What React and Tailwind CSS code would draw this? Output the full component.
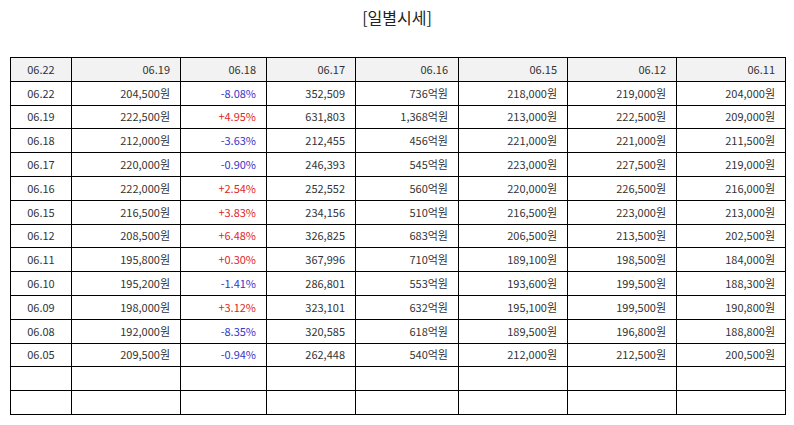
import React from "react";

const headers = ["06.22", "06.19", "06.18", "06.17", "06.16", "06.15", "06.12", "06.11"];
const widths = ["w-[61px]", "w-[109px]", "w-[86px]", "w-[89px]", "w-[103px]", "w-[109px]", "w-[109px]", "w-[109px]"];

const rows = [
  ["06.22", "204,500원", "-8.08%", "352,509", "736억원", "218,000원", "219,000원", "204,000원"],
  ["06.19", "222,500원", "+4.95%", "631,803", "1,368억원", "213,000원", "222,500원", "209,000원"],
  ["06.18", "212,000원", "-3.63%", "212,455", "456억원", "221,000원", "221,000원", "211,500원"],
  ["06.17", "220,000원", "-0.90%", "246,393", "545억원", "223,000원", "227,500원", "219,000원"],
  ["06.16", "222,000원", "+2.54%", "252,552", "560억원", "220,000원", "226,500원", "216,000원"],
  ["06.15", "216,500원", "+3.83%", "234,156", "510억원", "216,500원", "223,000원", "213,000원"],
  ["06.12", "208,500원", "+6.48%", "326,825", "683억원", "206,500원", "213,500원", "202,500원"],
  ["06.11", "195,800원", "+0.30%", "367,996", "710억원", "189,100원", "198,500원", "184,000원"],
  ["06.10", "195,200원", "-1.41%", "286,801", "553억원", "193,600원", "199,500원", "188,300원"],
  ["06.09", "198,000원", "+3.12%", "323,101", "632억원", "195,100원", "199,500원", "190,800원"],
  ["06.08", "192,000원", "-8.35%", "320,585", "618억원", "189,500원", "196,800원", "188,800원"],
  ["06.05", "209,500원", "-0.94%", "262,448", "540억원", "212,000원", "212,500원", "200,500원"],
  ["", "", "", "", "", "", "", ""],
  ["", "", "", "", "", "", "", ""],
];

function rateColor(v) {
  if (v.startsWith("+")) return "text-[#e0262b]";
  if (v.startsWith("-")) return "text-[#3535c8]";
  return "";
}

export default function App() {
  return (
    <div className="w-[794px] h-[425px] bg-white text-[#333] font-['Noto_Sans_CJK_KR','Noto_Sans',sans-serif]">
      <h1 className="pt-[5px] h-[57px] text-center text-[16px] leading-[24px] text-[#222]">[일별시세]</h1>
      <table className="ml-[10px] w-[776px] border-collapse table-fixed text-[11px]">
        <colgroup>
          {widths.map((w, i) => (
            <col key={i} className={w} />
          ))}
        </colgroup>
        <thead>
          <tr className="h-[23.8px] bg-[#f2f2f2]">
            {headers.map((h, i) => (
              <th
                key={i}
                className={`border border-black font-normal py-0 leading-none ${i === 0 ? "text-center" : "text-right pr-[10px]"}`}
              >
                {h}
              </th>
            ))}
          </tr>
        </thead>
        <tbody>
          {rows.map((r, ri) => (
            <tr key={ri} className="h-[23.8px]">
              {r.map((c, ci) => (
                <td
                  key={ci}
                  className={`border border-black py-0 leading-none ${ci === 0 ? "text-center" : "text-right pr-[10px]"} ${ci === 2 ? rateColor(c) : ""}`}
                >
                  {c}
                </td>
              ))}
            </tr>
          ))}
        </tbody>
      </table>
    </div>
  );
}
